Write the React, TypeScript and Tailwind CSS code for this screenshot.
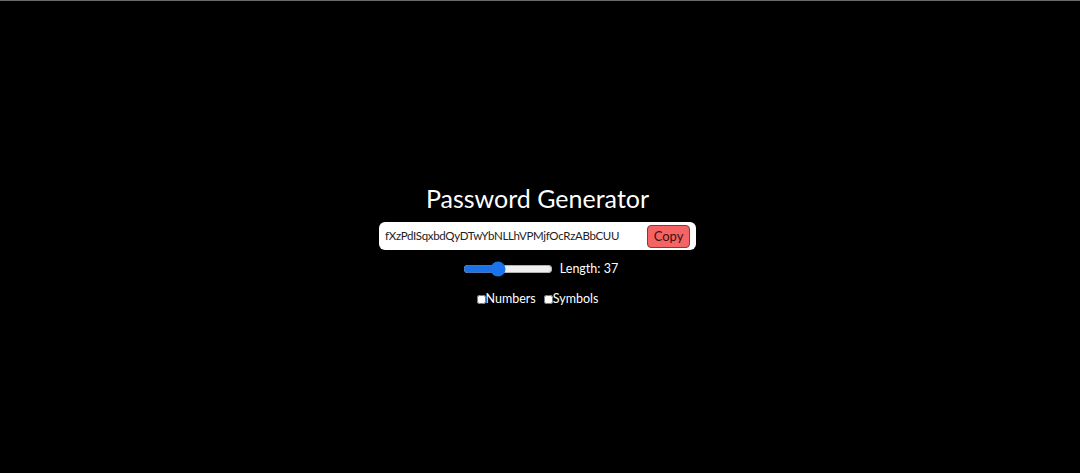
import { useState } from "react";

function App() {
  const [length, setLength] = useState(37);
  const [numbers, setNumbers] = useState(false);
  const [symbols, setSymbols] = useState(false);
  const password = "fXzPdISqxbdQyDTwYbNLLhVPMjfOcRzABbCUU";

  return (
    <div
      className="min-h-screen bg-black border-t border-[#6b6b6b] text-white flex flex-col items-center pt-[181px] pr-[5px]"
      style={{ fontFamily: 'Lato, "Noto Sans", sans-serif' }}
    >
      <h1 className="text-[25px] leading-[32px] font-normal">Password Generator</h1>
      <div className="mt-[8px] w-[317px] h-[28px] bg-white rounded-[6px] flex items-center justify-between pl-[6px] pr-[6px]">
        <input
          readOnly
          value={password}
          className="w-[250px] text-[11.5px] tracking-[-0.33px] text-[#222] outline-none bg-transparent"
        />
        <button className="h-[23px] w-[43px] bg-[#f56464] border border-[#6d4444] rounded-[4px] text-[13px] text-[#3b1010] leading-none">
          Copy
        </button>
      </div>
      <div className="mt-[10px] ml-[6px] flex items-center gap-[7px] text-[12.5px]">
        <input
          type="range"
          min={0}
          max={100}
          value={length}
          onChange={(e) => setLength(Number(e.target.value))}
          className="w-[90px] h-[14px] accent-[#1a73e8]"
        />
        <span>Length: {length}</span>
      </div>
      <div className="mt-[11px] flex items-center gap-[8px] text-[12.5px]">
        <label className="flex items-center">
          <input
            type="checkbox"
            checked={numbers}
            onChange={() => setNumbers(!numbers)}
            className="w-[9px] h-[9px] m-0"
          />
          Numbers
        </label>
        <label className="flex items-center">
          <input
            type="checkbox"
            checked={symbols}
            onChange={() => setSymbols(!symbols)}
            className="w-[9px] h-[9px] m-0"
          />
          Symbols
        </label>
      </div>
    </div>
  );
}

export default App;
